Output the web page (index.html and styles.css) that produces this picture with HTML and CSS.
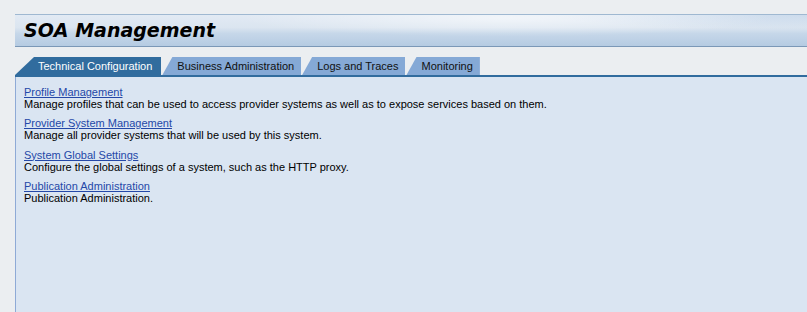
FILE: index.html
```html
<!DOCTYPE html>
<html lang="en">
<head>
    <meta charset="UTF-8">
    <title>SOA Management</title>
    <link rel="stylesheet" href="styles.css">
</head>
<body>
<div class="page">
    <div class="header">
        <h1>SOA Management</h1>
    </div>

    <div class="tabs">
        <div class="tab active">Technical Configuration</div>
        <div class="tab">Business Administration</div>
        <div class="tab">Logs and Traces</div>
        <div class="tab">Monitoring</div>
    </div>

    <div class="content">
        <div class="item">
            <a href="#">Profile Management</a>
            <p>Manage profiles that can be used to access provider systems as well as to expose services based on them.</p>
        </div>
        <div class="item">
            <a href="#">Provider System Management</a>
            <p>Manage all provider systems that will be used by this system.</p>
        </div>
        <div class="item">
            <a href="#">System Global Settings</a>
            <p>Configure the global settings of a system, such as the HTTP proxy.</p>
        </div>
        <div class="item">
            <a href="#">Publication Administration</a>
            <p>Publication Administration.</p>
        </div>
    </div>
</div>
</body>
</html>
```

FILE: styles.css
```css
html, body {
    margin: 0;
    padding: 0;
    height: 100%;
    overflow: hidden;
}
body {
    background: #ebeef1;
    font-family: "Liberation Sans", Arial, sans-serif;
    font-size: 11px;
}
.page {
    padding: 14px 0 0 15px;
}
.header {
    height: 31px;
    border-top: 1px solid #9fb8d1;
    border-bottom: 1px solid #7b98b7;
    background:
        radial-gradient(ellipse 45% 80% at 62% 10%, rgba(255,255,255,0.55), rgba(255,255,255,0) 75%),
        radial-gradient(ellipse 40% 60% at 100% 0%, rgba(190,210,232,0.6), rgba(190,210,232,0) 80%),
        linear-gradient(#e2eaf4 0%, #dbe5f0 40%, #c6d7e9 60%, #b5cbe2 100%);
    padding-left: 9px;
}
h1 {
    margin: 0;
    font-family: "DejaVu Sans", Verdana, sans-serif;
    font-size: 19px;
    font-weight: bold;
    font-style: italic;
    line-height: 31px;
    color: #000;
}
.tabs {
    display: flex;
    gap: 1px;
    margin-top: 10px;
    height: 18px;
    border-bottom: 2px solid #316c9e;
}
.tab {
    height: 18px;
    line-height: 18px;
    padding: 0 7px 0 15px;
    background: #85a9d6;
    color: #111;
    clip-path: polygon(10px 0, 100% 0, 100% 100%, 0 100%);
    white-space: nowrap;
}
.tab.active {
    background: #316c9e;
    color: #fff;
    padding: 0 9px 0 23px;
    clip-path: polygon(19px 0, 100% 0, 100% 100%, 0 100%);
}
.content {
    background: #dae5f2;
    border-left: 1px solid #8eaad6;
    height: 240px;
    padding: 9px 0 0 8px;
    line-height: 12px;
}
.item {
    margin-bottom: 7.3px;
}
.item a {
    color: #2448a8;
    text-decoration: underline;
}
.item p {
    margin: 0;
    color: #000;
}
```
